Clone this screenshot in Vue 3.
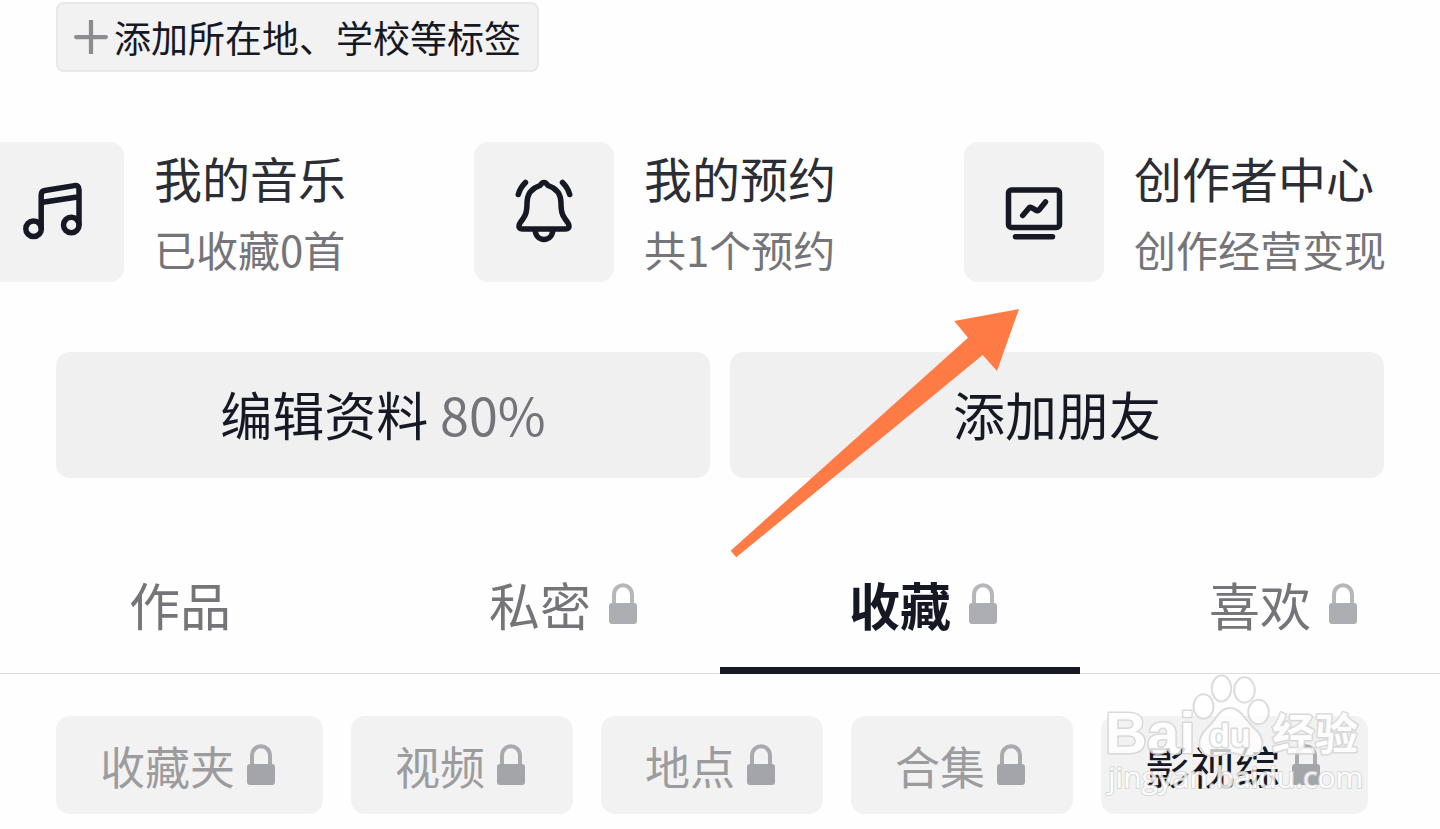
<script setup>
import { ref } from "vue";

const shortcuts = [
  { icon: "music", title: "我的音乐", note: "已收藏0首" },
  { icon: "bell", title: "我的预约", note: "共1个预约" },
  { icon: "screen", title: "创作者中心", note: "创作经营变现" }
];

const tabs = [
  { name: "作品", locked: false },
  { name: "私密", locked: true },
  { name: "收藏", locked: true },
  { name: "喜欢", locked: true }
];

const filters = ["收藏夹", "视频", "地点", "合集", "影视综"];

const activeTab = ref("收藏");
const activeFilter = ref("影视综");
</script>

<template>
  <div class="page">
    <button class="add-tag" type="button">
      <svg class="plus" viewBox="0 0 32 32" aria-hidden="true">
        <path d="M2 16H30M16 1V31" />
      </svg>
      添加所在地、学校等标签
    </button>

    <nav class="shortcuts">
      <a v-for="item in shortcuts" :key="item.title" class="shortcut" href="#">
        <span class="tile">
          <svg viewBox="0 0 140 140" aria-hidden="true">
            <g v-if="item.icon === 'music'">
              <circle cx="49.6" cy="86.7" r="7.8" />
              <circle cx="87.3" cy="83" r="7.8" />
              <path d="M57.2 86V53Q57.2 49.2 61 48.5L90.5 43.6Q95 43 95 47.5V82M57.2 60.5L95 54.8" />
            </g>
            <g v-else-if="item.icon === 'bell'">
              <path d="M66 43.5Q70 37.5 74 43.5C83 46.5 87 53 87 61C87 72 89 74 94 81Q97 87 91 87H49Q43 87 46 81C51 74 53 72 53 61C53 53 57 46.5 66 43.5Z" />
              <path d="M61.3 88C61.3 100.5 78.7 100.5 78.7 88" />
              <path d="M51.5 40.5Q46 46 44.3 52.5M88.5 40.5Q94 46 95.7 52.5" />
            </g>
            <g v-else>
              <rect x="44.5" y="48" width="51" height="37.5" rx="3" />
              <path d="M51.5 94.7H88.5" />
              <path d="M58.7 73.5L65 66Q66 65 67.5 65.7L72.5 68.5Q74 69.2 75 68L81.5 60" />
            </g>
          </svg>
        </span>
        <span class="shortcut-text">
          <strong>{{ item.title }}</strong>
          <small>{{ item.note }}</small>
        </span>
      </a>
    </nav>

    <section class="actions">
      <button type="button">编辑资料 <span>80%</span></button>
      <button type="button">添加朋友</button>
      <svg class="arrow" viewBox="0 0 290 250" aria-hidden="true">
        <path d="M0.7 242.7L238 29.7L224.3 13L289 1L267 63L252.7 47L6.3 249.3Z" />
      </svg>
    </section>

    <div class="tabs" role="tablist">
      <button
        v-for="tab in tabs"
        :key="tab.name"
        type="button"
        role="tab"
        :aria-selected="activeTab === tab.name"
        :class="{ active: activeTab === tab.name }"
        @click="activeTab = tab.name"
      >
        <span class="tab-name">{{ tab.name }}</span>
        <svg v-if="tab.locked" class="lock" viewBox="0 0 30 42" aria-hidden="true">
          <path class="shackle" d="M6 21V12C6 -1 24 -1 24 12V21" />
          <rect x="1" y="20" width="28" height="21" rx="3" />
        </svg>
      </button>
    </div>

    <div class="filters">
      <button
        v-for="name in filters"
        :key="name"
        type="button"
        :class="{ active: activeFilter === name }"
        @click="activeFilter = name"
      >
        {{ name }}
        <svg class="lock" viewBox="0 0 30 42" aria-hidden="true">
          <path class="shackle" d="M6 21V12C6 -1 24 -1 24 12V21" />
          <rect x="1" y="20" width="28" height="21" rx="3" />
        </svg>
      </button>
    </div>

    <svg class="watermark" viewBox="0 0 270 150">
      <g class="paw">
        <ellipse cx="121.5" cy="18.5" rx="9.7" ry="13" />
        <ellipse cx="144.5" cy="20" rx="10.3" ry="12.7" />
        <ellipse cx="103.5" cy="36.5" rx="10" ry="12.3" />
        <ellipse cx="158.5" cy="42" rx="10.3" ry="12.3" />
        <path d="M130 38C119 38 117 49 108 57C94 70 98 86 113 86C122 86 124 83 131 83C138 83 141 86 149 86C165 86 167 69 154 58C144 49 141 38 130 38Z" />
      </g>
      <g class="mark">
        <text class="brand" x="5" y="83">Bai</text>
        <text class="brand-small" x="109" y="77">du</text>
        <text class="brand-cjk" x="172" y="80">经验</text>
        <text class="site" x="8" y="118">jingyan.baidu.com</text>
      </g>
    </svg>
  </div>
</template>

<style>
body {
  margin: 0;
  background: #fefefe;
}
</style>

<style scoped>
* {
  box-sizing: border-box;
}

.page {
  position: relative;
  overflow: hidden;
  padding: 2px 0 15px;
  font-family: "Noto Sans CJK SC", sans-serif;
  color: #161823;
}

button {
  border: none;
  padding: 0;
  font-family: inherit;
  color: inherit;
  cursor: pointer;
}

.add-tag {
  display: flex;
  align-items: center;
  gap: 6px;
  height: 70px;
  margin-left: 56px;
  padding: 0 16px;
  border: 2px solid #e8e8e8;
  border-radius: 8px;
  background: #f2f2f2;
  font-size: 37px;
}

.plus {
  width: 34px;
  height: 34px;
  fill: none;
  stroke: #8c8c90;
  stroke-width: 4;
  stroke-linecap: round;
}

.shortcuts {
  display: flex;
  margin: 70px 0 0 -16px;
}

.shortcut {
  display: flex;
  flex: 1 0 490px;
  gap: 30px;
  color: inherit;
  text-decoration: none;
}

.tile {
  width: 140px;
  height: 140px;
  border-radius: 14px;
  background: #f2f2f2;
}

.tile svg {
  display: block;
  fill: none;
  stroke: #161823;
  stroke-width: 5.5;
  stroke-linecap: round;
  stroke-linejoin: round;
}

.shortcut-text {
  display: flex;
  flex-direction: column;
  gap: 12px;
  padding-top: 5px;
  white-space: nowrap;
}

.shortcut-text strong {
  font-size: 48px;
  line-height: 60px;
  font-weight: 400;
  color: #2c2e36;
}

.shortcut-text small {
  font-size: 42px;
  line-height: 60px;
  color: #757579;
}

.actions {
  position: relative;
  display: grid;
  grid-template-columns: 1fr 1fr;
  gap: 20px;
  margin: 70px 56px 0;
}

.actions button {
  height: 126px;
  padding-bottom: 4px;
  border-radius: 14px;
  background: #f0f0f0;
  font-size: 52px;
}

.actions span {
  color: #737379;
}

.arrow {
  position: absolute;
  top: -44px;
  left: calc(50% + 10px);
  width: 290px;
  height: 250px;
  fill: #ff7b45;
  pointer-events: none;
}

.tabs {
  display: grid;
  grid-template-columns: repeat(4, 1fr);
  height: 134px;
  margin: 62px 0 42px;
  border-bottom: 1px solid #dedee0;
}

.tabs button {
  display: grid;
  grid-template-columns: 1fr auto 1fr;
  align-items: center;
  column-gap: 17px;
  height: 134px;
  border-bottom: 7px solid transparent;
  background: none;
  font-size: 51px;
  color: #757579;
}

.tabs button.active {
  border-color: #161823;
  font-weight: 700;
  color: #161823;
}

.tab-name {
  grid-column: 2;
}

.lock {
  width: 30px;
  height: 42px;
  fill: #adaeb3;
}

.shackle {
  fill: none;
  stroke: #b6b7ba;
  stroke-width: 4;
}

.filters {
  display: flex;
  gap: 28px;
  padding: 0 56px;
}

.filters button {
  display: flex;
  align-items: center;
  gap: 11px;
  height: 98px;
  padding: 0 47px 0 44px;
  border-radius: 14px;
  background: #f2f2f2;
  font-size: 45px;
  white-space: nowrap;
  color: #9c9c9f;
}

.filters button.active {
  color: #161823;
}

.filters .lock {
  fill: #a4a5ab;
}

.filters .shackle {
  stroke: #a9aaae;
}

.watermark {
  position: absolute;
  right: 70px;
  bottom: 9px;
  width: 270px;
  height: 150px;
  pointer-events: none;
}

.paw {
  fill: rgba(255, 255, 255, 0.75);
  stroke: #dcdcdc;
  stroke-width: 2;
}

.mark {
  fill: #ffffff;
  stroke: #d4d4d4;
  stroke-width: 3;
  stroke-linejoin: round;
  paint-order: stroke;
  opacity: 0.85;
}

.brand {
  font: 700 58px "Liberation Sans", sans-serif;
}

.brand-small {
  font: 700 34px "Liberation Sans", sans-serif;
}

.brand-cjk {
  font: 700 43px "Noto Sans CJK SC", sans-serif;
}

.site {
  font: 400 30px "Open Sans", sans-serif;
  stroke-width: 2;
}
</style>
